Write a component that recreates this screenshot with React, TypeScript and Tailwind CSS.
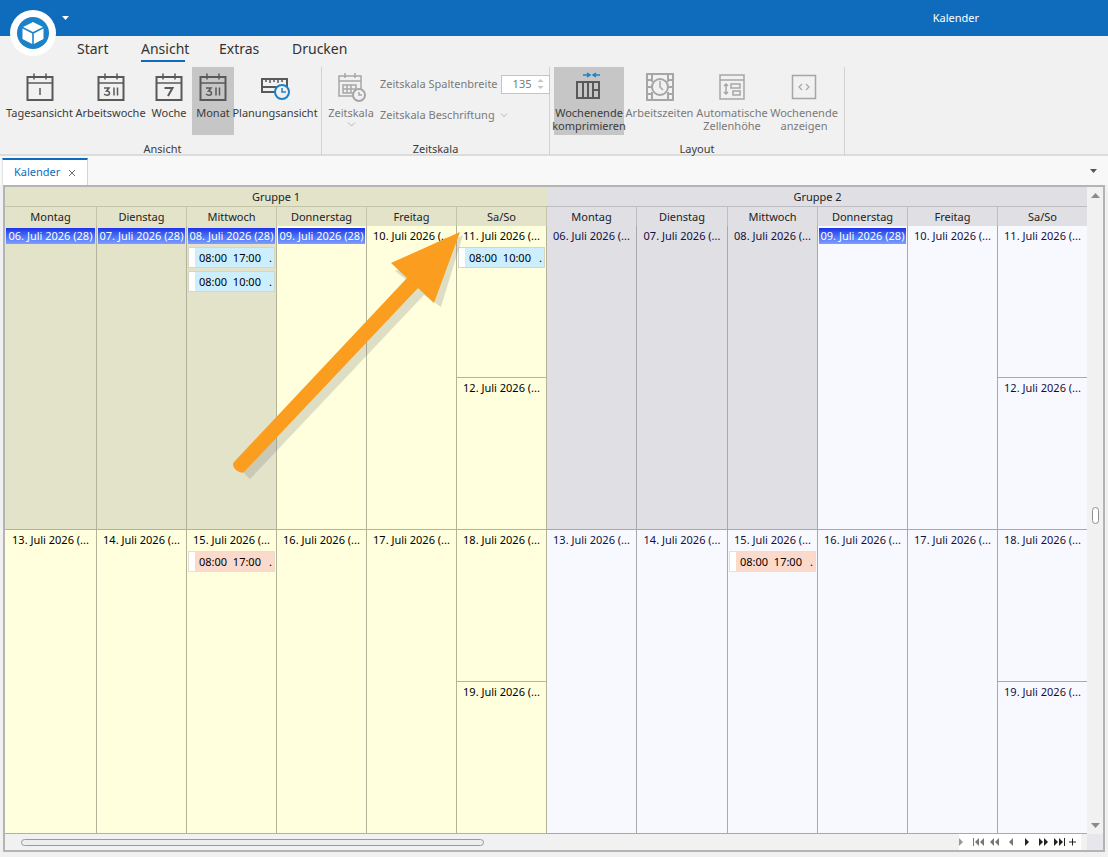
import React from "react"

const Cal = ({ label, dim }: { label?: string; dim?: boolean }) => (
    <svg width="28" height="30" viewBox="0 0 28 30" fill="none" stroke={dim ? "#a6a6a6" : "#595959"} strokeWidth="2">
        <rect x="1.5" y="5" width="25" height="23" />
        <path d="M1.5 11h25M8 1.5v6M20 1.5v6" strokeWidth="1.5" />
        {label === "1" && <path d="M14 16v7" strokeWidth="1.5" />}
        {label === "31" && <path d="M7 16h5l-2.500 3c2 0 3 1 3 2.200s-1 2-2.500 2c-1 0-2-.3-3-1M17 15.500v8M20.500 15.500v8" strokeWidth="1.500" />}
        {label === "7" && <path d="M9.500 16h8l-4.500 8" strokeWidth="2" />}
    </svg>
)

const Clock = ({ x, y, r, color }: { x: number; y: number; r: number; color: string }) => (
    <g>
        <circle cx={x} cy={y} r={r} fill="#f1f1f1" stroke={color} strokeWidth="2" />
        <path d={`M${x} ${y - r + 3}v${r - 3}h${r - 3}`} stroke={color} strokeWidth="1.500" fill="none" />
    </g>
)

const RibbonButton = ({ icon, label, active, dim, width }: { icon: React.ReactNode; label: React.ReactNode; active?: boolean; dim?: boolean; width: string }) => (
    <div className={`${width} h-[68px] flex flex-col items-center pt-[4px] shrink-0 ${active ? "bg-[#c6c6c6]" : ""}`}>
        <div className="h-[32px] flex items-center justify-center">{icon}</div>
        <div className={`mt-[3px] text-[11px] leading-[13px] text-center whitespace-nowrap ${dim ? "text-[#7a7a7a]" : "text-[#3b3b3b]"}`}>{label}</div>
    </div>
)

const Section = ({ title, width, children }: { title: string; width: string; children: React.ReactNode }) => (
    <div className={`${width} h-[88px] flex flex-col border-r border-[#d2d2d2] shrink-0`}>
        <div className="h-[68px] flex items-start">{children}</div>
        <div className="flex-1 text-[11px] leading-[13px] pt-[7px] text-center text-[#3b3b3b]">{title}</div>
    </div>
)

const Ribbon = () => (
    <div className="h-[94px] pt-[5px] bg-[#f1f1f1] border-b-2 border-[#dcdcdc] flex pl-[4px]">
        <Section title="Ansicht" width="w-[318px]">
            <RibbonButton width="w-[71px]" icon={<Cal label="1" />} label="Tagesansicht" />
            <RibbonButton width="w-[71px]" icon={<Cal label="31" />} label="Arbeitswoche" />
            <RibbonButton width="w-[46px]" icon={<Cal label="7" />} label="Woche" />
            <RibbonButton width="w-[42px]" icon={<Cal label="31" />} label="Monat" active />
            <RibbonButton
                width="w-[82px]"
                icon={
                    <svg width="32" height="30" viewBox="0 0 32 30" fill="none">
                        <path d="M3 7h25v8H3zM3 15v5h13" stroke="#595959" strokeWidth="2" />
                        <path d="M7 7v3M11 7v4M15 7v3M19 7v4M23 7v3" stroke="#595959" strokeWidth="1.500" />
                        <Clock x={23} y={20} r={7} color="#1b82c9" />
                    </svg>
                }
                label="Planungsansicht"
            />
        </Section>
        <Section title="Zeitskala" width="w-[228px]">
            <div className="w-[50px] flex flex-col items-center pt-[4px] shrink-0 ml-[4px]">
                <svg width="32" height="32" viewBox="0 0 32 32" fill="none" stroke="#a6a6a6">
                    <path d="M4 5h22v20H4zM4 10h22M10 2v5M20 2v5M8 14h13v8H8zM12 14v8M16 14v8M8 18h13" strokeWidth="1.500" />
                    <Clock x={24} y={24} r={6} color="#a6a6a6" />
                </svg>
                <div className="mt-[3px] text-[11px] leading-[13px] text-[#7a7a7a]">Zeitskala</div>
                <svg className="mt-[3px]" width="9" height="5" viewBox="0 0 9 5" fill="none" stroke="#b5b5b5"><path d="M1 0.500l3.500 3.500 3.500-3.500" /></svg>
            </div>
            <div className="flex flex-col pl-[4px] pt-[6px]">
                <div className="flex items-center h-[22px] text-[11px] text-[#7a7a7a] whitespace-nowrap">
                    Zeitskala Spaltenbreite
                    <div className="ml-[3px] w-[49px] h-[19px] bg-white border border-[#c4c4c4] flex items-center justify-between pl-[11px] pr-[5px] text-[#7a7a7a]">
                        135
                        <svg width="7" height="12" viewBox="0 0 7 12" fill="#c4c4c4"><path d="M3.500 1l3 3H.5zM3.500 11l3-3H.5z" /></svg>
                    </div>
                </div>
                <div className="flex items-center h-[22px] mt-[9px] text-[11px] text-[#7a7a7a] whitespace-nowrap gap-[5px]">
                    Zeitskala Beschriftung
                    <svg width="8" height="5" viewBox="0 0 8 5" fill="none" stroke="#b5b5b5"><path d="M1 .5l3 3 3-3" /></svg>
                </div>
            </div>
        </Section>
        <Section title="Layout" width="w-[295px]">
            <div className="w-[4px]" />
            <RibbonButton
                width="w-[70px]"
                active
                icon={
                    <svg width="32" height="32" viewBox="0 0 32 32" fill="none">
                        <path d="M4 11h22v16H4zM10 11v16M15 11v16M20 11v16M20 19h6" stroke="#595959" strokeWidth="2" />
                        <path d="M10 4h7M14 2l3 2-3 2M27 4h-7M23 2l-3 2 3 2" stroke="#1b82c9" strokeWidth="1.500" />
                    </svg>
                }
                label={<>Wochenende<br />komprimieren</>}
            />
            <RibbonButton
                dim
                width="w-[71px]"
                icon={
                    <svg width="32" height="30" viewBox="0 0 32 30" fill="none" stroke="#a6a6a6" strokeWidth="2">
                        <path d="M3 2h26v26H3zM3 8h5M3 15h5M3 22h5M24 8h5M24 15h5M24 22h5M8 2v8M24 2v8M8 20v8M24 20v8" />
                        <circle cx="16" cy="15" r="8" />
                        <path d="M16 9v6l3 3" strokeWidth="1.500" />
                    </svg>
                }
                label="Arbeitszeiten"
            />
            <RibbonButton
                dim
                width="w-[74px]"
                icon={
                    <svg width="28" height="28" viewBox="0 0 28 28" fill="none" stroke="#a6a6a6" strokeWidth="1.500">
                        <path d="M2 2h24v24H2zM2 7h24M8 11v10M6 13l2-2 2 2M6 19l2 2 2-2M13 11h9v4h-9zM15 18h7v4h-7z" />
                    </svg>
                }
                label={<>Automatische<br />Zellenhöhe</>}
            />
            <RibbonButton
                dim
                width="w-[70px]"
                icon={
                    <svg width="26" height="26" viewBox="0 0 26 26" fill="none" stroke="#a6a6a6">
                        <rect x="1.500" y="1.500" width="23" height="23" strokeWidth="1.500" />
                        <path d="M11 10l-3 3 3 3M15 10l3 3-3 3" strokeWidth="1.200" />
                    </svg>
                }
                label={<>Wochenende<br />anzeigen</>}
            />
        </Section>
    </div>
)

const Appointment = ({ times, tone }: { times: string; tone: "blue" | "red" }) => (
    <div className={`h-[21px] mx-[1px] mb-[3px] flex border ${tone === "blue" ? "bg-[#cdeefd] border-[#d6d6c4]" : "bg-[#fbd9cb] border-[#e8e0cc]"}`}>
        <div className="w-[6px] bg-white shrink-0" />
        <div className="flex-1 flex justify-between pl-[4px] pr-[2px] text-[11px] leading-[19px] text-black whitespace-pre overflow-hidden">
            <span>{times}</span>
            <span>.</span>
        </div>
    </div>
)

type Day = { date: string; highlight?: boolean; appts?: { times: string; tone: "blue" | "red" }[] }

const DateLabel = ({ day, dark }: { day: Day; dark: boolean }) =>
    day.highlight ? (
        <div className="h-[16px] mt-[2px] mx-[1px] mb-[3px] bg-gradient-to-b from-[#1f2fe8] to-[#7f9dff] text-white text-[11px] leading-[16px] text-center whitespace-nowrap overflow-hidden">
            {day.date}
        </div>
    ) : (
        <div className={`h-[16px] mt-[2px] mb-[3px] text-[11px] leading-[16px] text-center whitespace-nowrap overflow-hidden ${dark ? "text-[#101040]" : "text-black"}`}>{day.date}</div>
    )

const Cell = ({ day, bg, border, className }: { day: Day; bg: string; border: string; className: string }) => (
    <div className={`${bg} ${border} ${className} overflow-hidden`}>
        <DateLabel day={day} dark={border === "border-[#a9a9a9]"} />
        {day.appts?.map((a, i) => <Appointment key={i} times={a.times} tone={a.tone} />)}
    </div>
)

const names = ["Montag", "Dienstag", "Mittwoch", "Donnerstag", "Freitag", "Sa/So"]

type GroupProps = {
    name: string
    headBg: string
    headBorder: string
    cellBorder: string
    widths: string[]
    weeks: { days: Day[]; bgs: string[]; sat: Day; sun: Day; weekendBg: string }[]
}

const Group = ({ name, headBg, headBorder, cellBorder, widths, weeks }: GroupProps) => (
    <div className="flex flex-col shrink-0">
        <div className={`h-[20px] ${headBg} border-b ${headBorder} text-[11px] leading-[19px] text-center text-[#222]`}>{name}</div>
        <div className="flex h-[20px]">
            {names.map((n, i) => (
                <div key={n} className={`${widths[i]} ${headBg} border-r ${headBorder} text-[11px] leading-[19px] text-center text-[#222]`}>{n}</div>
            ))}
        </div>
        {weeks.map((w, wi) => (
            <div key={wi} className="flex h-[304px]">
                {w.days.map((d, i) => (
                    <Cell key={d.date} day={d} bg={w.bgs[i]} border={cellBorder} className={`${widths[i]} border-r border-b`} />
                ))}
                <div className={`${widths[5]} flex flex-col`}>
                    <Cell day={w.sat} bg={w.weekendBg} border={cellBorder} className="h-[152px] border-r border-b" />
                    <Cell day={w.sun} bg={w.weekendBg} border={cellBorder} className="h-[152px] border-r border-b" />
                </div>
            </div>
        ))}
    </div>
)

const oliv = "bg-[#e3e3c9]"
const yel = "bg-[#ffffde]"
const gry = "bg-[#dfdfe4]"
const wht = "bg-[#f8f9ff]"

const widths1 = ["w-[92px]", "w-[90px]", "w-[90px]", "w-[90px]", "w-[90px]", "w-[90px]"]
const widths2 = ["w-[90px]", "w-[91px]", "w-[90px]", "w-[90px]", "w-[90px]", "w-[90px]"]

const group1Weeks = [
    {
        days: [
            { date: "06. Juli 2026 (28)", highlight: true },
            { date: "07. Juli 2026 (28)", highlight: true },
            { date: "08. Juli 2026 (28)", highlight: true, appts: [{ times: "08:00  17:00", tone: "blue" as const }, { times: "08:00  10:00", tone: "blue" as const }] },
            { date: "09. Juli 2026 (28)", highlight: true },
            { date: "10. Juli 2026 (..." },
        ],
        bgs: [oliv, oliv, oliv, yel, yel],
        sat: { date: "11. Juli 2026 (...", appts: [{ times: "08:00  10:00", tone: "blue" as const }] },
        sun: { date: "12. Juli 2026 (..." },
        weekendBg: yel,
    },
    {
        days: [
            { date: "13. Juli 2026 (..." },
            { date: "14. Juli 2026 (..." },
            { date: "15. Juli 2026 (...", appts: [{ times: "08:00  17:00", tone: "red" as const }] },
            { date: "16. Juli 2026 (..." },
            { date: "17. Juli 2026 (..." },
        ],
        bgs: [yel, yel, yel, yel, yel],
        sat: { date: "18. Juli 2026 (..." },
        sun: { date: "19. Juli 2026 (..." },
        weekendBg: yel,
    },
]

const group2Weeks = [
    {
        days: [
            { date: "06. Juli 2026 (..." },
            { date: "07. Juli 2026 (..." },
            { date: "08. Juli 2026 (..." },
            { date: "09. Juli 2026 (28)", highlight: true },
            { date: "10. Juli 2026 (..." },
        ],
        bgs: [gry, gry, gry, wht, wht],
        sat: { date: "11. Juli 2026 (..." },
        sun: { date: "12. Juli 2026 (..." },
        weekendBg: wht,
    },
    {
        days: [
            { date: "13. Juli 2026 (..." },
            { date: "14. Juli 2026 (..." },
            { date: "15. Juli 2026 (...", appts: [{ times: "08:00  17:00", tone: "red" as const }] },
            { date: "16. Juli 2026 (..." },
            { date: "17. Juli 2026 (..." },
        ],
        bgs: [wht, wht, wht, wht, wht],
        sat: { date: "18. Juli 2026 (..." },
        sun: { date: "19. Juli 2026 (..." },
        weekendBg: wht,
    },
]

const NavGlyphs = () => (
    <svg width="122" height="10" viewBox="0 0 122 10" fill="#777">
        <path d="M0 1l4 4-4 4z" fill="#999" />
        <g transform="translate(14 0)">
            <path d="M0 1h1v8H0zM6 1v8L2 5zM11 1v8L7 5z" />
            <path d="M21 1v8l-4-4zM26 1v8l-4-4z" />
            <path d="M40 1v8l-4-4z" />
            <path d="M52 1l4 4-4 4z" fill="#222" />
            <path d="M66 1l4 4-4 4zM71 1l4 4-4 4z" fill="#222" />
            <path d="M81 1l4 4-4 4zM86 1l4 4-4 4zM91 1h1v8h-1z" fill="#222" />
            <path d="M96 4.500h7v1h-7zM99 1.500h1v7h-1z" fill="#222" />
            <path d="M111 4.500h7v1h-7z" fill="#222" />
        </g>
    </svg>
)

const Calendar = () => (
    <div className="relative mx-[3px] h-[667px] border-2 border-[#b4b4b4] bg-white flex flex-col overflow-hidden">
        <div className="flex flex-1 min-h-0">
            <div className="flex flex-1 min-w-0 overflow-hidden">
                <Group name="Gruppe 1" headBg={oliv} headBorder="border-[#c4c4a6]" cellBorder="border-[#b3b398]" widths={widths1} weeks={group1Weeks} />
                <Group name="Gruppe 2" headBg={gry} headBorder="border-[#bdbdc4]" cellBorder="border-[#a9a9a9]" widths={widths2} weeks={group2Weeks} />
            </div>
            <div className="w-[16px] bg-[#f1f1f1] flex flex-col items-center justify-between py-[6px] shrink-0 relative">
                <svg width="9" height="5" viewBox="0 0 9 5" fill="#8a8a8a"><path d="M4.500 0l4.500 5H0z" /></svg>
                <div className="w-[7px] h-[17px] rounded-full bg-white border border-[#8e8e8e] absolute top-[320px]" />
                <svg width="9" height="5" viewBox="0 0 9 5" fill="#8a8a8a"><path d="M4.500 5L9 0H0z" /></svg>
            </div>
        </div>
        <div className="h-[16px] flex shrink-0 bg-[#f1f1f1]">
            <div className="flex-1 flex items-center pl-[16px]">
                <div className="w-[463px] h-[7px] rounded-full bg-[#ededed] border border-[#9a9a9a]" />
            </div>
            <div className="w-[122px] bg-white flex items-center -ml-[6px]"><NavGlyphs /></div>
            <div className="w-[16px] bg-[#e6e6ec] ml-[6px]" />
        </div>
    </div>
)

const Arrow = () => (
    <svg className="absolute left-[220px] top-[220px] pointer-events-none" width="250" height="260" viewBox="0 0 250 260" fill="none">
        <path d="M17 246L190 62L172 48L240 12L218 84L201 72L27 256Z" fill="#7a7a7a" opacity="0.25" transform="translate(3 3)" />
        <path d="M14 242L187 58L171 43L240 12L214 83L198 68L24 252C20 255 10 247 14 242Z" fill="#fb9d1f" />
    </svg>
)

export default function App() {
    return (
        <div className="relative w-[1108px] h-[857px] overflow-hidden bg-[#f1f1f1] font-['Noto_Sans',sans-serif]">
            <div className="h-[36px] bg-[#0f6cbd] flex items-center justify-end pr-[129px] text-[11px] text-white">Kalender</div>
            <div className="absolute left-[10px] top-[10px] w-[46px] h-[46px] rounded-full bg-white flex items-center justify-center">
                <div className="w-[32px] h-[32px] rounded-full bg-[#1b82c9] flex items-center justify-center">
                    <svg width="24" height="24" viewBox="0 0 24 24" fill="white">
                        <path d="M12 1l10 5-10 5L2 6zM1.500 7.500l9.700 5v10.500l-9.700-5zM22.500 7.500l-9.700 5v10.500l9.700-5z" />
                    </svg>
                </div>
            </div>
            <svg className="absolute left-[62px] top-[16px]" width="7" height="4" viewBox="0 0 7 4" fill="white"><path d="M0 0h7L3.500 4z" /></svg>
            <div className="h-[26px] flex items-start text-[14px] leading-[26px] text-[#333] pl-[77px]">
                <span className="w-[64px]">Start</span>
                <span className="w-[78px] relative">
                    Ansicht
                    <span className="absolute left-0 top-[24px] w-[44px] h-[2px] bg-[#0f6cbd]" />
                </span>
                <span className="w-[73px]">Extras</span>
                <span>Drucken</span>
            </div>
            <Ribbon />
            <div className="h-[29px] bg-[#f8f8f8] flex items-end pl-[2px] relative">
                <div className="w-[86px] h-[27px] bg-white border-t-2 border-[#0f6cbd] border-r border-l border-l-[#e2e2e2] border-r-[#d4d4d4] flex items-center justify-between pl-[11px] pr-[11px] text-[11px] text-[#0f6cbd]">
                    Kalender
                    <svg width="8" height="8" viewBox="0 0 8 8" stroke="#707070"><path d="M1 1l6 6M7 1l-6 6" /></svg>
                </div>
                <svg className="absolute right-[11px] top-[13px]" width="7" height="4" viewBox="0 0 7 4" fill="#555"><path d="M0 0h7L3.500 4z" /></svg>
            </div>
            <Calendar />
            <Arrow />
        </div>
    )
}
